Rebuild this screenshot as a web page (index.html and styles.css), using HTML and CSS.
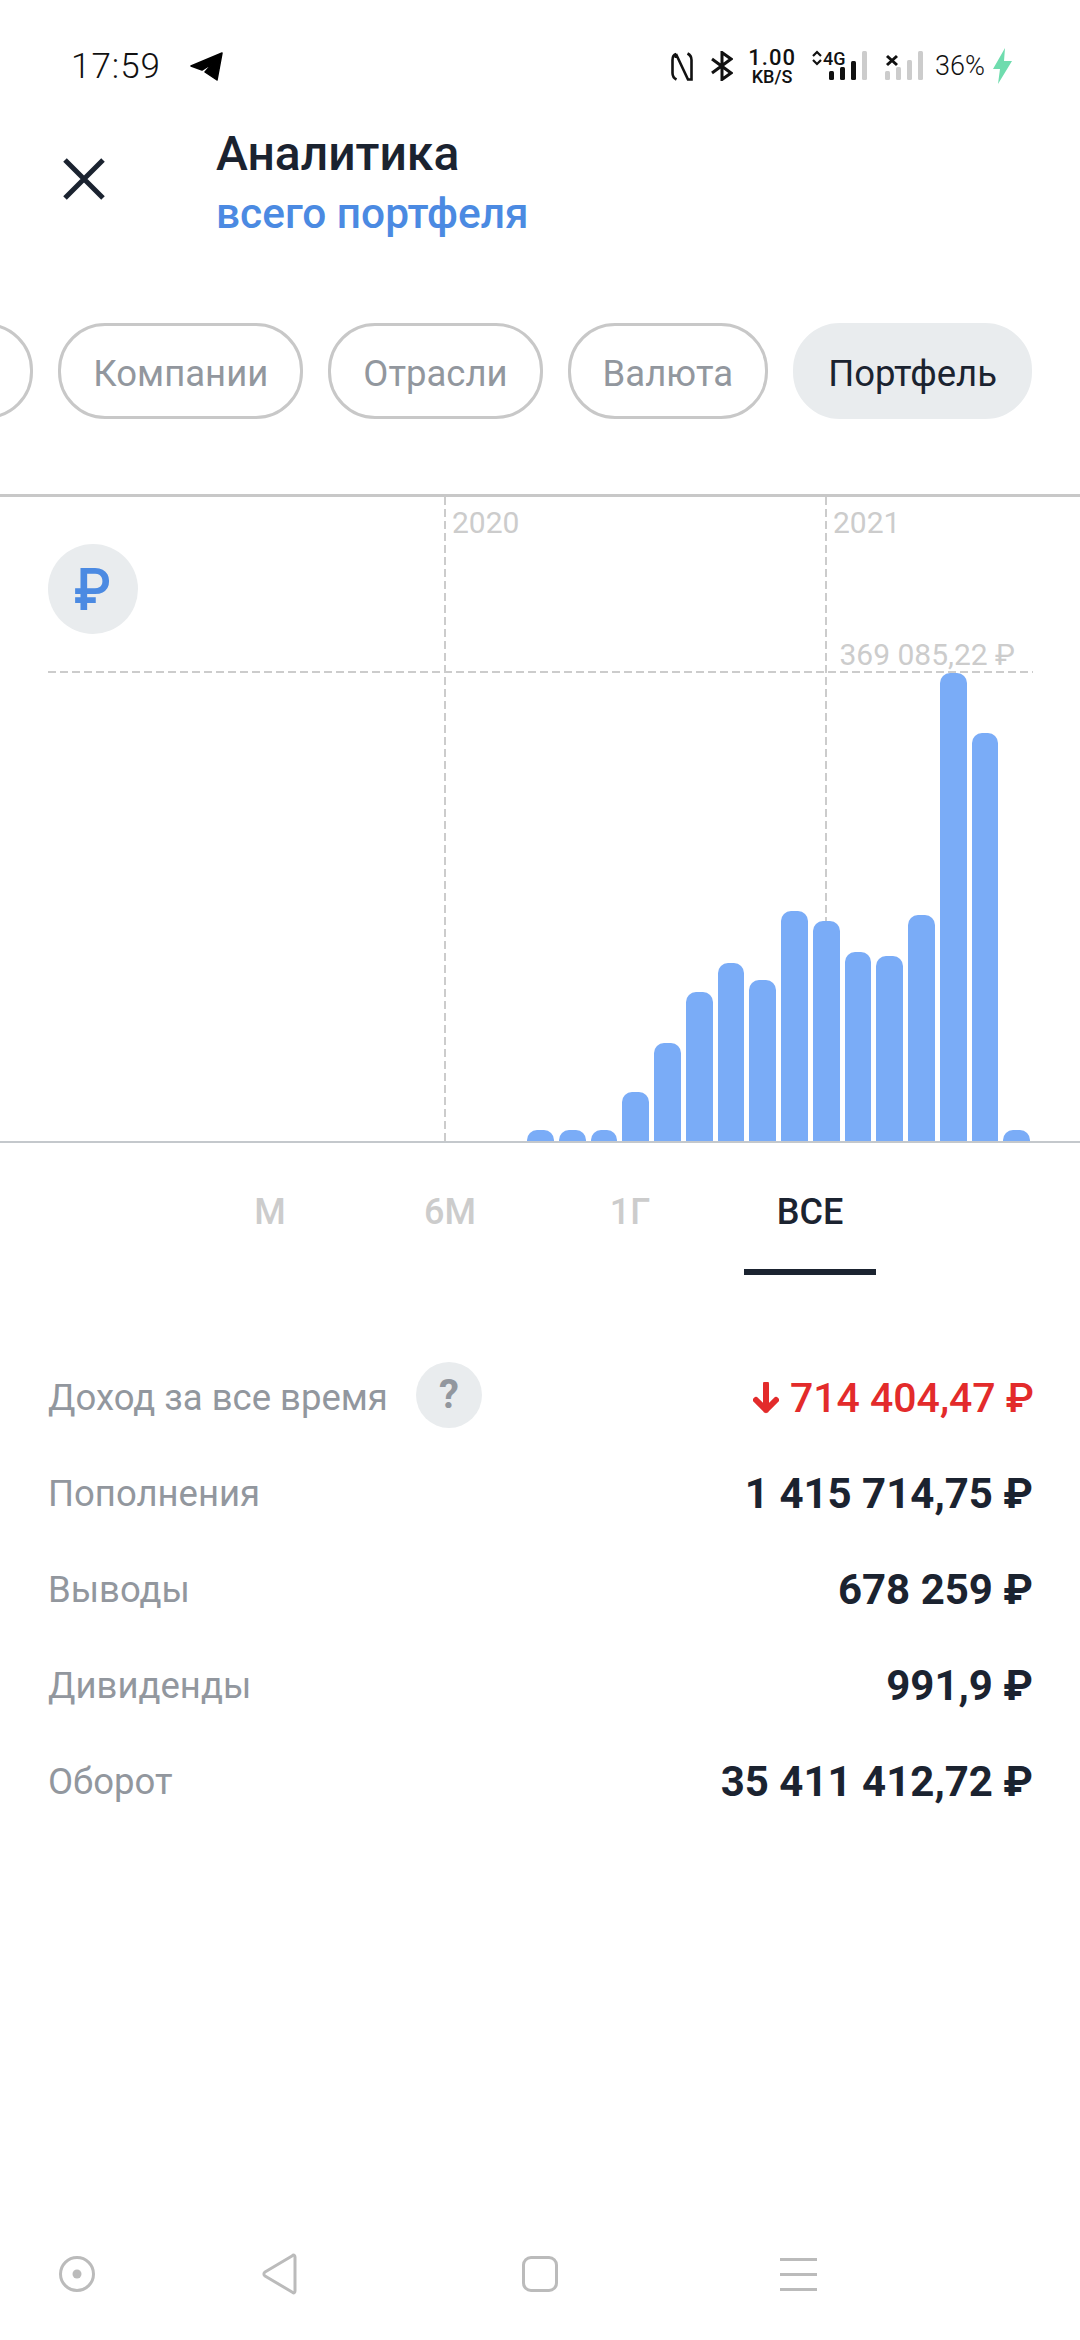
FILE: index.html
```html
<!DOCTYPE html>
<html lang="ru">
<head>
    <meta charset="UTF-8">
    <meta name="viewport" content="width=device-width, initial-scale=1.0">
    <title>Аналитика</title>
    <link rel="stylesheet" href="styles.css">
</head>
<body>

    <!-- status bar -->
    <div class="status">
        <span class="time">17:59</span>
        <svg class="tg" width="33" height="29" viewBox="0 0 33 29">
            <path d="M32 1 L1 14 L12 18 L23 11 L15 20 L27 28 Z" fill="#000" stroke="#000" stroke-width="1.5" stroke-linejoin="round"/>
        </svg>
        <div class="status-right">
            <svg class="nfc" width="22" height="29" viewBox="0 0 22 29">
                <path d="M5 2 C2 3 1.500 5 1.500 8 V21 C1.500 24 2.500 26 5.500 27.500 M5 6 V2 L17 27.500 H20.500 V8 C20.500 5 19.500 3 16.500 1.500" fill="none" stroke="#111" stroke-width="2.600"/>
            </svg>
            <svg class="bt" width="22" height="30" viewBox="0 0 22 30">
                <path d="M1 8 L20 22 L11 28.500 V1.500 L20 8 L1 22" fill="none" stroke="#111" stroke-width="3"/>
            </svg>
            <div class="speed">
                <span class="speed-num">1.00</span>
                <span class="speed-unit">KB/S</span>
            </div>
            <svg class="sig1" width="56" height="40" viewBox="0 -4 56 40">
                <path d="M1 6 L5 2 L9 6 M1 10 L5 14 L9 10" fill="none" stroke="#111" stroke-width="2.200"/>
                <text x="11" y="15" class="sig-text">4G</text>
                <rect x="17" y="21" width="5" height="9" rx="1.500" fill="#111"/>
                <rect x="28" y="17" width="5" height="13" rx="1.500" fill="#111"/>
                <rect x="39" y="11" width="5" height="19" rx="1.500" fill="#111"/>
                <rect x="50" y="1" width="5" height="29" rx="1.500" fill="#ccc"/>
            </svg>
            <svg class="sig2" width="40" height="32" viewBox="0 0 40 32">
                <path d="M2 6 L12 15 M12 6 L2 15" stroke="#111" stroke-width="3"/>
                <rect x="0" y="21" width="5" height="9" rx="1.500" fill="#ccc"/>
                <rect x="11" y="17" width="5" height="13" rx="1.500" fill="#ccc"/>
                <rect x="22" y="10" width="5" height="20" rx="1.500" fill="#ccc"/>
                <rect x="33" y="1" width="5" height="29" rx="1.500" fill="#ccc"/>
            </svg>
            <span class="battery">36%</span>
            <svg class="bolt" width="19" height="36" viewBox="0 0 19 36">
                <path d="M12 0 L0 21 H7 L5 36 L19 13 H11 Z" fill="#6fdcae"/>
            </svg>
        </div>
    </div>

    <!-- header -->
    <div class="header">
        <svg class="close" width="42" height="42" viewBox="0 0 42 42">
            <path d="M2 2 L40 40 M40 2 L2 40" stroke="#1b2330" stroke-width="5"/>
        </svg>
        <div class="header-text">
            <div class="title">Аналитика</div>
            <div class="subtitle">всего портфеля</div>
        </div>
    </div>

    <!-- filter chips -->
    <div class="chips">
        <div class="chip chip-cut"></div>
        <div class="chip">Компании</div>
        <div class="chip">Отрасли</div>
        <div class="chip">Валюта</div>
        <div class="chip chip-active">Портфель</div>
    </div>

    <!-- chart -->
    <div class="chart">
        <div class="year year-2020"><span>2020</span></div>
        <div class="year year-2021"><span>2021</span></div>
        <div class="cur"><span>₽</span></div>
        <div class="max-label">369 085,22 ₽</div>
        <div class="max-line"></div>
        <div class="bars">
            <div class="bar" style="height: 11px"></div>
            <div class="bar" style="height: 11px"></div>
            <div class="bar" style="height: 11px"></div>
            <div class="bar" style="height: 49px"></div>
            <div class="bar" style="height: 98px"></div>
            <div class="bar" style="height: 149px"></div>
            <div class="bar" style="height: 178px"></div>
            <div class="bar" style="height: 161px"></div>
            <div class="bar" style="height: 230px"></div>
            <div class="bar" style="height: 220px"></div>
            <div class="bar" style="height: 189px"></div>
            <div class="bar" style="height: 185px"></div>
            <div class="bar" style="height: 226px"></div>
            <div class="bar" style="height: 468px"></div>
            <div class="bar" style="height: 408px"></div>
            <div class="bar" style="height: 11px"></div>
        </div>
    </div>

    <!-- period tabs -->
    <div class="tabs">
        <div class="tab">М</div>
        <div class="tab">6М</div>
        <div class="tab">1Г</div>
        <div class="tab tab-active">ВСЕ</div>
    </div>

    <!-- totals -->
    <div class="rows">
        <div class="row">
            <div class="label">Доход за все время <span class="help">?</span></div>
            <div class="value value-down">
                <svg class="arrow" width="26" height="32" viewBox="0 0 26 32">
                    <path d="M13 2 V28 M3 18 L13 28 L23 18" fill="none" stroke="#e32b2b" stroke-width="6" stroke-linecap="round" stroke-linejoin="round"/>
                </svg>
                <span>714 404,47 ₽</span>
            </div>
        </div>
        <div class="row">
            <div class="label">Пополнения</div>
            <div class="value">1 415 714,75 ₽</div>
        </div>
        <div class="row">
            <div class="label">Выводы</div>
            <div class="value">678 259 ₽</div>
        </div>
        <div class="row">
            <div class="label">Дивиденды</div>
            <div class="value">991,9 ₽</div>
        </div>
        <div class="row">
            <div class="label">Оборот</div>
            <div class="value">35 411 412,72 ₽</div>
        </div>
    </div>

    <!-- system nav -->
    <div class="nav">
        <svg class="nav-home" width="36" height="36" viewBox="0 0 36 36">
            <circle cx="18" cy="18" r="16.500" fill="none" stroke="#bbb" stroke-width="3"/>
            <circle cx="18" cy="18" r="4.500" fill="#bbb"/>
        </svg>
        <svg class="nav-back" width="36" height="42" viewBox="0 0 36 42">
            <path d="M33 4 C33 2 31.500 1.500 30 3 L3 19 C1.500 20 1.500 22 3 23 L30 39 C31.500 40.500 33 40 33 38 Z" fill="none" stroke="#bbb" stroke-width="3" stroke-linejoin="round"/>
        </svg>
        <div class="nav-square"></div>
        <div class="nav-menu"><span></span><span></span><span></span></div>
    </div>

</body>
</html>
```

FILE: styles.css
```css
* {
    box-sizing: border-box;
}

body {
    margin: 0;
    width: 1080px;
    height: 2340px;
    overflow: hidden;
    background-color: #ffffff;
    font-family: Roboto, "Liberation Sans", sans-serif;
    color: #1b2330;
    display: flex;
    flex-direction: column;
}

/* status bar */
.status {
    height: 100px;
    display: flex;
    align-items: center;
    padding: 32px 68px 0 71px;
}

.time {
    font-size: 35px;
    font-weight: 300;
    letter-spacing: 1px;
    color: #111;
}

.tg {
    margin-left: 29px;
}

.status-right {
    margin-left: auto;
    display: flex;
    align-items: center;
}

.bt {
    margin-left: 18px;
}

.speed {
    margin: 2px 0 0 15px;
    width: 48px;
    display: flex;
    flex-direction: column;
    align-items: center;
    color: #111;
    font-weight: 500;
}

.speed-num {
    font-size: 22px;
    line-height: 19px;
    letter-spacing: 1px;
}

.speed-unit {
    font-size: 18px;
    line-height: 19px;
}

.sig1 {
    margin-left: 16px;
}

.sig-text {
    font-size: 18px;
    font-weight: 500;
    fill: #111;
}

.sig2 {
    margin-left: 17px;
}

.battery {
    margin-left: 10px;
    font-size: 27px;
    font-weight: 300;
    color: #111;
}

.bolt {
    margin-left: 8px;
}

/* header */
.header {
    height: 223px;
    display: flex;
    align-items: flex-start;
    padding: 24px 0 0 63px;
}

.close {
    margin-top: 34px;
}

.header-text {
    margin-left: 111px;
}

.title {
    font-size: 48px;
    font-weight: 500;
    line-height: 60px;
}

.subtitle {
    font-size: 42.400px;
    font-weight: 500;
    line-height: 60px;
    color: #4b8ae2;
}

/* chips */
.chips {
    height: 96px;
    display: flex;
    justify-content: flex-end;
    gap: 25px;
    padding-right: 48px;
    overflow: hidden;
}

.chip {
    flex-shrink: 0;
    height: 96px;
    padding: 4px 32px 0;
    display: flex;
    align-items: center;
    border: 3px solid #c8c8c8;
    border-radius: 47px;
    font-size: 36.500px;
    color: #92979e;
}

.chip-cut {
    width: 200px;
}

.chip-active {
    border-color: #e9ecee;
    background-color: #e9ecee;
    color: #1b2330;
}

/* chart */
.chart {
    position: relative;
    margin-top: 75px;
    height: 649px;
    border-top: 3px solid #c8c8c8;
    border-bottom: 2px solid #c4c8cc;
}

.bars {
    position: relative;
    height: 100%;
    display: flex;
    align-items: flex-end;
    gap: 5px;
    padding: 0 50px 0 527px;
}

.bar {
    flex: 1;
    background-color: #7aacf7;
    border-radius: 10px 10px 0 0;
}

.year {
    position: absolute;
    top: 0;
    bottom: 0;
    width: 2px;
    background: repeating-linear-gradient(to bottom, #cccccc 0 8px, transparent 8px 12px);
}

.year-2020 {
    left: 444px;
}

.year-2021 {
    left: 825px;
}

.year span {
    position: absolute;
    left: 8px;
    top: 8px;
    font-size: 30px;
    line-height: 36px;
    color: #cccccc;
}

.cur {
    position: absolute;
    left: 48px;
    top: 47px;
    width: 90px;
    height: 90px;
    border-radius: 50%;
    background-color: #e9ecee;
    color: #4b8ae2;
    font-size: 60px;
    font-weight: 500;
    display: flex;
    align-items: center;
    justify-content: center;
}

.cur span {
    transform: scaleX(0.9);
}

.max-line {
    position: absolute;
    left: 48px;
    right: 47px;
    top: 174px;
    height: 2px;
    background: repeating-linear-gradient(to right, #cccccc 0 8px, transparent 8px 12px);
}

.max-label {
    position: absolute;
    right: 65px;
    top: 140px;
    font-size: 30px;
    line-height: 36px;
    color: #cccccc;
}

/* tabs */
.tabs {
    height: 132px;
    display: flex;
    justify-content: center;
    gap: 48px;
}

.tab {
    width: 132px;
    padding-top: 47px;
    text-align: center;
    font-size: 36px;
    font-weight: 500;
    line-height: 44px;
    color: #cccccc;
    border-bottom: 6px solid transparent;
}

.tab-active {
    color: #1b2330;
    border-bottom-color: #1b2330;
}

/* rows */
.rows {
    margin-top: 75px;
    padding: 0 47px 0 48px;
}

.row {
    height: 95.800px;
    display: flex;
    align-items: center;
    justify-content: space-between;
}

.label {
    display: flex;
    align-items: center;
    font-size: 36.500px;
    color: #92979e;
}

.help {
    margin: -6px 0 0 28px;
    width: 66px;
    height: 66px;
    border-radius: 50%;
    background-color: #e9ecee;
    color: #92979e;
    font-size: 40px;
    font-weight: 700;
    display: flex;
    align-items: center;
    justify-content: center;
}

.value {
    display: flex;
    align-items: center;
    font-size: 42px;
    font-weight: 700;
}

.value-down {
    font-size: 41px;
    font-weight: 500;
    color: #e32b2b;
    margin-right: -1px;
}

.arrow {
    margin-right: 11px;
}

/* nav */
.nav {
    margin-top: auto;
    height: 86px;
    padding: 0 0 46px 59px;
    display: flex;
    align-items: center;
}

.nav-back {
    margin-left: 167px;
}

.nav-square {
    margin-left: 224px;
    width: 36px;
    height: 36px;
    border: 3px solid #bbb;
    border-radius: 9px;
}

.nav-menu {
    margin-left: 222px;
    width: 37px;
    height: 33px;
    display: flex;
    flex-direction: column;
    justify-content: space-between;
}

.nav-menu span {
    height: 3px;
    background-color: #bbb;
}
```
